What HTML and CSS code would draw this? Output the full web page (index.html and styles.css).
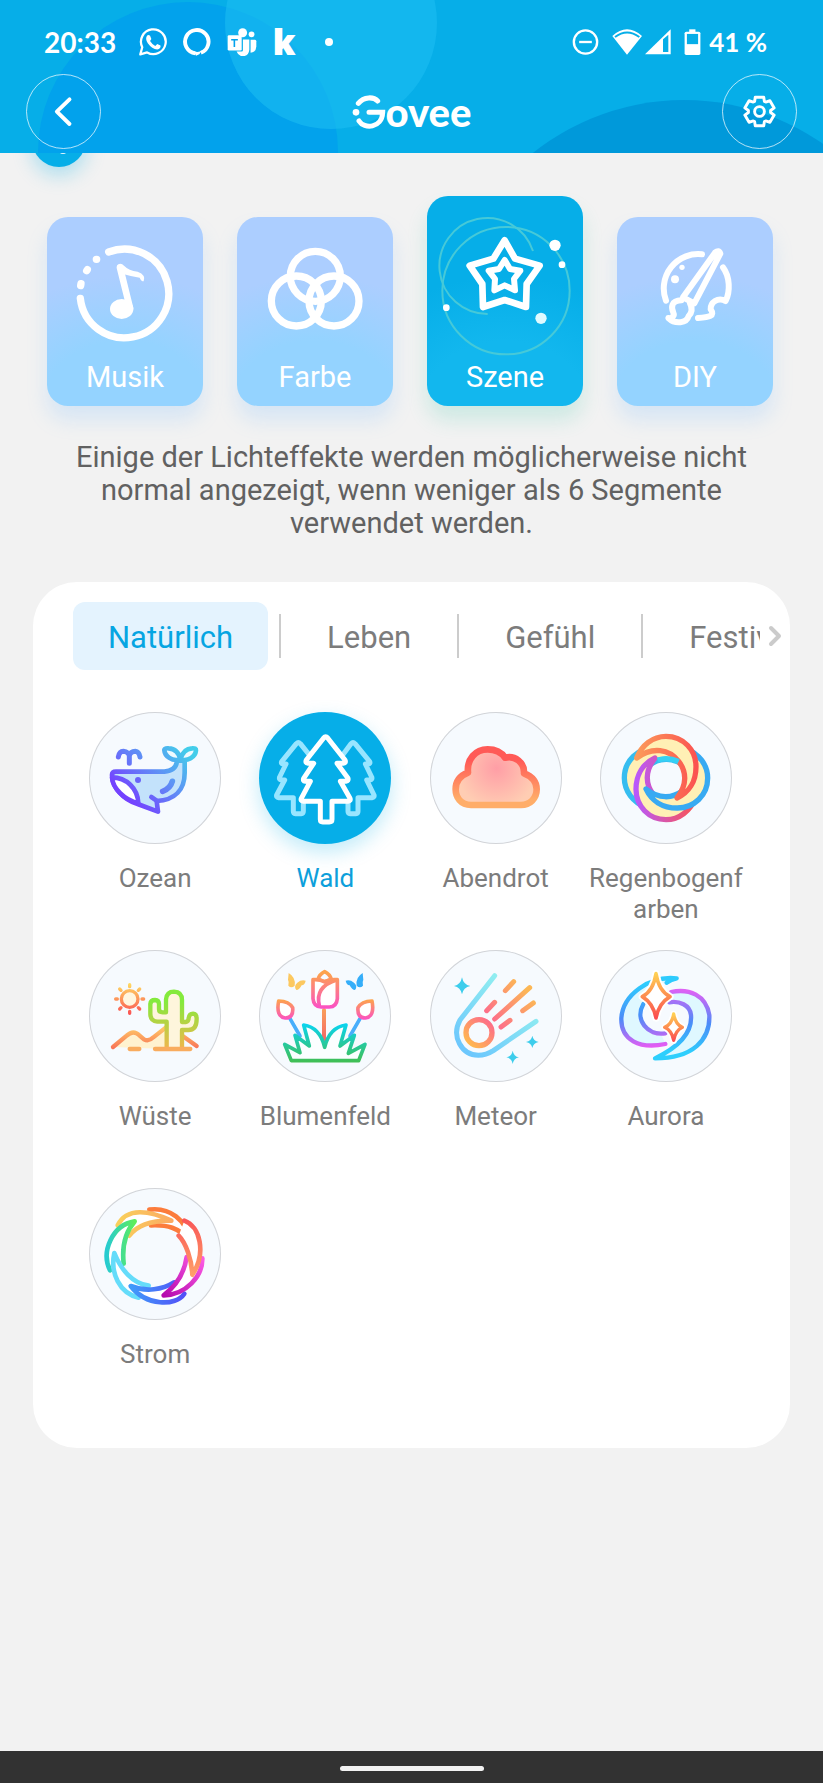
FILE: index.html
```html
<!DOCTYPE html>
<html lang="de">
<head>
    <meta charset="UTF-8">
    <meta name="viewport" content="width=device-width, initial-scale=1.0">
    <title>Govee</title>
    <link rel="stylesheet" href="styles.css">
</head>
<body>
    <header class="header">
        <svg class="header-bg" viewBox="0 0 823 153" preserveAspectRatio="xMidYMid slice" aria-hidden="true">
            <circle cx="188" cy="152" r="150" fill="#02a2ec"/>
            <circle cx="331" cy="23" r="106" fill="#1cbcf2" fill-opacity=".6"/>
            <circle cx="684" cy="342" r="242" fill="#0099da"/>
        </svg>

        <div class="status">
            <span class="status-time">20:33</span>
            <!-- WhatsApp -->
            <svg class="status-icon" viewBox="416 83 86 86">
                <path d="M420 164 L426 142 A38 38 0 1 1 441 158 Z" fill="none" stroke="#fff" stroke-width="7" stroke-linejoin="round"/>
                <path d="M441 106 Q446 102 450 107 L454 117 L450 123 Q456 133 466 138 L472 132 L482 137 Q484 147 472 149 Q456 148 443 130 Q434 116 441 106 Z" fill="#fff"/>
            </svg>
            <!-- Alexa -->
            <svg class="status-icon" viewBox="548 83 86 86">
                <path d="M586 161 A36 36 0 1 1 603 159" fill="none" stroke="#fff" stroke-width="12"/>
                <path d="M580 154 L588 168 L598 164 L606 152 Q596 160 580 154 Z" fill="#fff"/>
            </svg>
            <!-- Teams -->
            <svg class="status-icon teams" viewBox="677 82 92 88">
                <circle cx="725" cy="97" r="14" fill="#fff"/>
                <circle cx="753" cy="102" r="9" fill="#fff"/>
                <path d="M750 119 H764 Q768 119 768 124 V140 Q767 158 750 160 Z" fill="#fff"/>
                <path d="M726 118 H746 V150 Q744 170 725 171 Q711 170 706 156 H722 Q726 156 726 152 Z" fill="#fff"/>
                <rect x="678" y="105" width="44" height="48" rx="4" fill="#fff"/>
                <path d="M689 119 H710 M699 119 V142" stroke="#02a2ec" stroke-width="5"/>
            </svg>
            <span class="status-k">k</span>
            <span class="status-dot"></span>

            <div class="status-right">
                <!-- do not disturb -->
                <svg class="dnd" viewBox="485 86 80 78" fill="none" stroke="#fff">
                    <circle cx="525" cy="125" r="35" stroke-width="7"/>
                    <path d="M506 125 H544" stroke-width="7"/>
                </svg>
                <!-- wifi -->
                <svg class="wifi" viewBox="605 86 90 78">
                    <path d="M650 163 L606 107 Q650 67 695 107 Z" fill="#fff"/>
                    <path d="M614 110 Q650 83 687 110" fill="none" stroke="#06aee8" stroke-width="6"/>
                </svg>
                <!-- signal -->
                <svg class="signal" viewBox="703 86 78 78">
                    <path d="M703 162 L780 87 V162 Z" fill="#fff"/>
                    <path d="M757 117 L773 103 V155 H757 Z" fill="#06aee8"/>
                </svg>
                <!-- battery -->
                <svg class="battery" viewBox="821 86 50 79">
                    <rect x="836" y="87" width="19" height="10" fill="#fff"/>
                    <rect x="822" y="94" width="48" height="71" rx="5" fill="#fff"/>
                    <rect x="829" y="101" width="34" height="31" fill="#06aee8"/>
                </svg>
                <span class="status-percent">41 %</span>
            </div>
        </div>

        <div class="titlebar">
            <button class="round-button" aria-label="Zurück">
                <svg viewBox="78 222 225 225"><path d="M209 297 L170 335 L209 373" fill="none" stroke="#fff" stroke-width="12" stroke-linecap="round" stroke-linejoin="round"/></svg>
            </button>
            <h1 class="logo" aria-label="Govee">
                <svg viewBox="20 25 100 102" fill="none" stroke="#fff" stroke-width="15" stroke-linecap="round">
                    <path d="M38 50 C55 29 84 30 96 43"/>
                    <path d="M70 77 H111 C109 126 55 128 40 103"/>
                    <circle cx="31" cy="77" r="10" fill="#fff" stroke="none"/>
                </svg>
                <span>ovee</span>
            </h1>
            <button class="round-button" aria-label="Einstellungen">
                <svg viewBox="-112 -112 224 224" fill="none" stroke="#fff" stroke-width="9" stroke-linejoin="round">
                    <path d="M-15 -31 L-13 -44 L13 -44 L15 -31 L19 -29 L32 -33 L45 -11 L34 -3 L34 3 L45 11 L32 33 L19 29 L15 31 L13 44 L-13 44 L-15 31 L-19 29 L-32 33 L-45 11 L-34 3 L-34 -3 L-45 -11 L-32 -33 L-19 -29 Z"/>
                    <circle r="15"/>
                </svg>
            </button>
        </div>
    </header>

    <main class="main">
        <span class="bubble"></span>

        <div class="modes">
            <button class="mode">
                <svg viewBox="80 111 468 396" fill="none" stroke="#fff" stroke-width="22" stroke-linecap="round">
                    <path d="M265 216 A133 133 0 1 1 180 355"/>
                    <path d="M228 238 h1 M201 269 l-2 3 M182 311 l-1 6"/>
                    <path d="M299 263 L329 384" stroke-width="20"/>
                    <path d="M290 256 Q300 246 312 258 Q325 272 352 275 Q378 285 370 304 Q362 304 358 293 Q335 290 308 282 Z" fill="#fff" stroke="none"/>
                    <ellipse cx="304" cy="387" rx="35" ry="30" fill="#fff" stroke="none"/>
                </svg>
                <span>Musik</span>
            </button>
            <button class="mode">
                <svg viewBox="651 111 468 396" fill="none" stroke="#fff" stroke-width="22">
                    <circle cx="886" cy="289" r="75"/>
                    <circle cx="829" cy="363" r="75"/>
                    <circle cx="942" cy="363" r="75"/>
                </svg>
                <span>Farbe</span>
            </button>
            <button class="mode active">
                <svg viewBox="53 111 468 396" fill="none" stroke="#fff" stroke-width="20" stroke-linejoin="round">
                    <g stroke="#46c9d8" stroke-width="6">
                        <circle cx="290" cy="332" r="191"/>
                        <path d="M371 213 A144 144 0 1 0 235 402"/>
                    </g>
                    <path d="M286 181 L317 236 L391 257 L352 312 L350 381 L286 360 L221 381 L219 312 L181 257 L252 236 Z"/>
                    <path d="M286 240 L302 267 L333 272 L314 297 L317 331 L286 316 L255 331 L257 297 L238 272 L269 267 Z" stroke-width="18"/>
                    <g fill="#fff" stroke="none">
                        <circle cx="437" cy="196" r="17"/>
                        <circle cx="458" cy="254" r="10"/>
                        <circle cx="111" cy="383" r="10"/>
                        <circle cx="395" cy="415" r="17" fill="#dffaff"/>
                    </g>
                </svg>
                <span>Szene</span>
            </button>
            <button class="mode">
                <svg viewBox="623 111 468 396" fill="none" stroke="#fff" stroke-width="18" stroke-linecap="round" stroke-linejoin="round">
                    <path d="M770 362 A103 103 0 0 1 878 223"/>
                    <path d="M941 262 C962 290 963 335 949 363 C925 350 903 368 904 388 C918 408 900 412 866 414"/>
                    <path d="M821 352 L917 218 Q929 208 933 221 L855 370 Z"/>
                    <path d="M816 361 C785 362 785 382 792 398 C797 409 785 416 777 414 C798 434 832 430 838 408 C850 396 848 382 842 370"/>
                    <circle cx="818" cy="262" r="8" fill="#fff" stroke="none"/>
                    <circle cx="797" cy="298" r="12" fill="#fff" stroke="none"/>
                </svg>
                <span>DIY</span>
            </button>
        </div>

        <p class="hint">Einige der Lichteffekte werden möglicherweise nicht normal angezeigt, wenn weniger als 6 Segmente verwendet werden.</p>

        <section class="panel">
            <div class="tabs-row">
                <nav class="tabs">
                    <button class="tab active">Natürlich</button>
                    <span class="divider"></span>
                    <button class="tab">Leben</button>
                    <span class="divider"></span>
                    <button class="tab">Gefühl</button>
                    <span class="divider"></span>
                    <button class="tab">Festival</button>
                </nav>
                <svg class="tabs-more" viewBox="0 0 14 24"><path d="M3 4 L11 12 L3 20" fill="none" stroke="#cbcbcb" stroke-width="4" stroke-linecap="round" stroke-linejoin="round"/></svg>
            </div>

            <div class="scenes">
                <button class="scene">
                    <svg viewBox="59 36 396 396" fill="none" stroke="url(#whale)" stroke-width="14" stroke-linecap="round" stroke-linejoin="round">
                        <defs>
                            <linearGradient id="whale" gradientUnits="userSpaceOnUse" x1="350" y1="150" x2="190" y2="310">
                                <stop offset="0" stop-color="#43cdea"/>
                                <stop offset=".45" stop-color="#5e92f5"/>
                                <stop offset="1" stop-color="#7442ff"/>
                            </linearGradient>
                        </defs>
                        <path d="M140 215 H285 Q321 212 323 182 H346 V218 C346 268 318 300 262 303 L266 335 L205 312 C160 298 128 260 128 225 Q128 215 140 215 Z" fill="#c3e2fb"/>
                        <path d="M128 232 C170 232 206 265 207 310 C165 300 130 265 128 232 Z" fill="#fff"/>
                        <path d="M246 291 L265 304"/>
                        <path d="M333 178 C308 186 286 168 285 150 Q286 144 298 145 Q326 146 333 178 Q342 146 368 145 Q381 144 380 151 C378 172 355 185 333 178 Z" fill="#effaff"/>
                        <path d="M280 274 Q303 266 309 244" stroke-width="17"/>
                        <path d="M147 171 Q150 154 162 154 Q178 156 180 168 V190 M180 168 Q183 154 198 154 Q209 155 212 171" stroke-width="15"/>
                        <circle cx="206" cy="240" r="9" fill="#6a63f9" stroke="none"/>
                    </svg>
                    <span>Ozean</span>
                </button>
                <button class="scene active">
                    <svg viewBox="569 36 396 396" fill="#06aee8" stroke="#98e5ff" stroke-width="15" stroke-linejoin="round">
                        <path d="M681 131 Q687 125 693 131 L737 186 Q740 192 732 192 H726 L744 231 Q746 239 734 240 L751 284 Q753 293 743 293 H702 V334 Q702 341 696 341 H678 Q672 341 672 334 V293 H628 Q620 292 622 285 L646 240 H636 Q628 239 631 231 L650 192 H642 Q634 191 637 185 Z"/>
                        <path d="M845 131 Q851 125 857 131 L901 185 Q904 191 896 192 H888 L907 231 Q910 239 902 240 H892 L914 285 Q916 292 908 293 H866 V334 Q866 341 860 341 H842 Q836 341 836 334 V293 H800 V192 Z"/>
                        <path d="M763 114 Q769 107 775 114 L827 180 Q831 189 822 190 H803 L836 235 Q838 243 830 244 H813 L842 295 Q845 303 836 304 H788 V358 Q788 366 780 366 H760 Q753 366 753 358 V304 H702 Q693 303 696 295 L723 244 H708 Q700 243 703 235 L733 190 H716 Q707 189 711 180 Z" stroke="#fff"/>
                    </svg>
                    <span>Wald</span>
                </button>
                <button class="scene">
                    <svg viewBox="60 36 396 396">
                        <defs>
                            <linearGradient id="cloud" x1="0" y1="0" x2="0" y2="1">
                                <stop offset=".2" stop-color="#ff5a57"/>
                                <stop offset=".9" stop-color="#ffad69"/>
                            </linearGradient>
                            <radialGradient id="glow" gradientUnits="userSpaceOnUse" cx="260" cy="205" r="120">
                                <stop offset="0" stop-color="#ff9ea6"/>
                                <stop offset="1" stop-color="#ffcdb3"/>
                            </radialGradient>
                        </defs>
                        <path d="M183 315 C152 315 137 292 137 268 C137 240 153 226 174 218 C170 178 196 148 233 148 C258 148 275 158 285 173 C315 165 344 188 342 220 C368 230 380 248 380 268 C380 295 360 315 333 315 Z" fill="url(#glow)" stroke="url(#cloud)" stroke-width="20" stroke-linejoin="round"/>
                    </svg>
                    <span>Abendrot</span>
                </button>
                <button class="scene">
                    <svg viewBox="572 36 396 396" fill="#fff0b5" stroke-width="16" stroke-linejoin="round">
                        <defs>
                            <path id="crescent" d="M682 174 C697 136 730 109 770 109 C822 109 860 150 860 200 C860 245 838 278 803 294 C834 255 832 215 808 184 C780 148 730 138 682 174 Z"/>
                            <linearGradient id="r1" x1="0" y1="0" x2="1" y2="0"><stop offset="0" stop-color="#fb9a5b"/><stop offset="1" stop-color="#fb5450"/></linearGradient>
                            <linearGradient id="r2" x1="0" y1="0" x2="1" y2="0"><stop offset="0" stop-color="#fb5450"/><stop offset="1" stop-color="#b958fb"/></linearGradient>
                        </defs>
                        <use href="#crescent" stroke="#36bdf0" transform="rotate(270 770 234)"/>
                        <use href="#crescent" stroke="url(#r2)" transform="rotate(180 770 234)"/>
                        <use href="#crescent" stroke="#38aaf2" transform="rotate(90 770 234)"/>
                        <use href="#crescent" stroke="url(#r1)"/>
                        <path d="M745 180 Q775 170 808 184" fill="none" stroke="#36d0f4"/>
                    </svg>
                    <span>Regenbogenfarben</span>
                </button>
                <button class="scene">
                    <svg viewBox="59 30 396 396" fill="none" stroke-width="13" stroke-linecap="round" stroke-linejoin="round">
                        <defs>
                            <linearGradient id="sun" gradientUnits="userSpaceOnUse" x1="0" y1="130" x2="0" y2="222"><stop offset="0" stop-color="#ffdc62"/><stop offset="1" stop-color="#fb5353"/></linearGradient>
                            <linearGradient id="cactus" gradientUnits="userSpaceOnUse" x1="0" y1="150" x2="0" y2="325"><stop offset=".2" stop-color="#84ea3d"/><stop offset="1" stop-color="#efb64b"/></linearGradient>
                            <linearGradient id="dune" gradientUnits="userSpaceOnUse" x1="0" y1="265" x2="0" y2="325"><stop offset="0" stop-color="#ffc565"/><stop offset="1" stop-color="#f87458"/></linearGradient>
                        </defs>
                        <path d="M131 321 L172 287 Q192 268 210 286 L224 298 Q238 306 252 292 L290 262 V327 Z" fill="#fff2cf" stroke="none"/>
                        <path d="M131 321 L172 287 Q192 268 210 286 L224 298 Q238 306 252 292 L290 262 M340 288 L382 318" stroke="url(#dune)"/>
                        <circle cx="181" cy="177" r="25" fill="#fff6df" stroke="url(#sun)" stroke-width="10"/>
                        <path d="M181 134 v6 M181 214 v6 M139 177 h5 M218 177 h5 M151 147 l4 4 M211 147 l-4 4 M151 207 l4 -4 M211 207 l-4 -4" stroke="url(#sun)" stroke-width="10"/>
                        <path d="M292 322 V245 H264 Q243 243 243 222 V192 Q244 180 257 180 Q269 181 269 192 V208 Q269 217 280 217 H290 V178 Q292 155 314 155 Q338 156 338 180 V246 H349 Q358 245 358 234 Q360 221 371 221 Q382 222 382 236 Q382 270 357 270 H338 V322" fill="#fef5dc" stroke="url(#cactus)"/>
                        <path d="M181 327 H210 M257 327 H363" stroke="#f9ac5e"/>
                    </svg>
                    <span>Wüste</span>
                </button>
                <button class="scene">
                    <svg viewBox="569 30 396 396" fill="none" stroke-width="11" stroke-linecap="round" stroke-linejoin="round">
                        <defs>
                            <linearGradient id="tulip" gradientUnits="userSpaceOnUse" x1="0" y1="100" x2="0" y2="205"><stop offset="0" stop-color="#fda34d"/><stop offset="1" stop-color="#fb4fc6"/></linearGradient>
                            <linearGradient id="bud" gradientUnits="userSpaceOnUse" x1="0" y1="180" x2="0" y2="240"><stop offset="0" stop-color="#fda34d"/><stop offset="1" stop-color="#fb4fc6"/></linearGradient>
                            <linearGradient id="grass" gradientUnits="userSpaceOnUse" x1="0" y1="250" x2="0" y2="365"><stop offset="0" stop-color="#09d4f2"/><stop offset="1" stop-color="#40bf55"/></linearGradient>
                            <linearGradient id="stem" gradientUnits="userSpaceOnUse" x1="0" y1="205" x2="0" y2="300"><stop offset="0" stop-color="#f9a05a"/><stop offset="1" stop-color="#f56866"/></linearGradient>
                        </defs>
                        <path d="M764 210 V300 L765 301" stroke="url(#stem)" stroke-width="12"/>
                        <path d="M662 236 L692 288 M872 236 L842 288" stroke="#48aefb"/>
                        <path d="M746 118 Q750 103 766 95 Q782 103 786 118 L766 125 Z" stroke="url(#tulip)"/>
                        <path d="M731 119 Q752 117 766 126 Q780 117 804 119 V176 Q802 201 780 201 H755 Q733 200 731 176 Z" fill="#fff" stroke="url(#tulip)"/>
                        <path d="M802 120 Q736 140 750 197" stroke="url(#tulip)"/>
                        <path d="M628 183 Q659 184 670 203 Q673 234 648 234 Q619 230 628 183 Z" fill="#fff" stroke="url(#bud)"/>
                        <path d="M908 183 Q877 184 866 203 Q863 234 888 234 Q917 230 908 183 Z" fill="#fff" stroke="url(#bud)"/>
                        <path d="M666 362 H868 L887 313 L837 340 L855 286 L812 318 L830 255 Q780 262 766 322 Q752 262 703 255 L720 318 L677 286 L692 338 L646 313 Z" fill="#fbfeff" stroke="url(#grass)"/>
                        <path d="M658 99 Q680 112 676 137 Q666 146 657 137 Q660 126 656 119 Z M681 150 Q672 138 684 128 Q696 118 709 122 Q707 134 697 136 Q690 150 681 150 Z" fill="#fcc860"/>
                        <path d="M880 99 Q858 112 862 137 Q872 146 881 137 Q878 126 882 119 Z M857 150 Q866 138 854 128 Q842 118 829 122 Q831 134 841 136 Q848 150 857 150 Z" fill="#35aef9"/>
                    </svg>
                    <span>Blumenfeld</span>
                </button>
                <button class="scene">
                    <svg viewBox="60 30 396 396" fill="none" stroke-width="15" stroke-linecap="round" stroke-linejoin="round">
                        <defs>
                            <linearGradient id="trail" gradientUnits="userSpaceOnUse" x1="300" y1="130" x2="150" y2="320"><stop offset="0" stop-color="#92eff0"/><stop offset="1" stop-color="#6cc7fd"/></linearGradient>
                            <linearGradient id="rock" gradientUnits="userSpaceOnUse" x1="240" y1="240" x2="175" y2="310"><stop offset="0" stop-color="#fd6a8b"/><stop offset="1" stop-color="#ffb851"/></linearGradient>
                            <linearGradient id="sparks" gradientUnits="userSpaceOnUse" x1="350" y1="150" x2="250" y2="240"><stop offset="0" stop-color="#fcb755"/><stop offset="1" stop-color="#fd6f89"/></linearGradient>
                        </defs>
                        <path d="M254 107 L150 240 C123 290 155 345 205 346 Q228 346 250 332 L378 244" stroke="url(#trail)"/>
                        <circle cx="207" cy="278" r="39" stroke="url(#rock)" stroke-width="16"/>
                        <path d="M254 237 L359 143 M230 212 L254 187 M286 152 L311 125 M273 261 L300 241 M338 212 L370 189" stroke="url(#sparks)"/>
                        <g fill="#3dcdec">
                            <path d="M156 112 Q160 134 181 138 Q160 142 156 163 Q152 142 132 138 Q152 134 156 112 Z"/>
                            <path d="M367 287 Q370 303 386 306 Q370 309 367 324 Q364 309 348 306 Q364 303 367 287 Z"/>
                            <path d="M308 332 Q311 349 327 352 Q311 355 308 372 Q305 355 289 352 Q305 349 308 332 Z"/>
                        </g>
                    </svg>
                    <span>Meteor</span>
                </button>
                <button class="scene">
                    <svg viewBox="572 30 396 396" fill="none" stroke-width="13" stroke-linecap="round" stroke-linejoin="round">
                        <defs>
                            <linearGradient id="a1" gradientUnits="userSpaceOnUse" x1="720" y1="110" x2="740" y2="320"><stop offset=".1" stop-color="#2ecbfd"/><stop offset=".55" stop-color="#4a8cf8"/><stop offset="1" stop-color="#e55cf3"/></linearGradient>
                            <linearGradient id="a2" gradientUnits="userSpaceOnUse" x1="810" y1="150" x2="790" y2="355"><stop offset="0" stop-color="#dd62f5"/><stop offset=".45" stop-color="#4a8cf8"/><stop offset=".9" stop-color="#2ecffd"/></linearGradient>
                            <linearGradient id="a3" x1="0" y1="0" x2="0" y2="1"><stop offset="0" stop-color="#ffd052"/><stop offset="1" stop-color="#fb4c50"/></linearGradient>
                        </defs>
                        <path d="M802 115 C720 106 640 165 636 235 C634 300 690 328 770 314 L755 282 C700 280 675 225 702 190 C720 150 760 125 802 115 Z" fill="#dff8ff"/>
                        <path d="M785 155 C840 145 890 165 900 225 C903 300 850 355 737 355 C800 325 850 285 845 225 C842 195 810 182 780 187 Z" fill="#dff8ff"/>
                        <path d="M768 312 C690 328 634 300 636 235 C640 165 720 106 802 115 Q785 119 772 128 M702 192 C675 240 715 288 768 280" stroke="url(#a1)"/>
                        <path d="M785 156 C840 145 890 165 900 225 C903 300 850 355 737 355 C800 325 850 285 845 225 C842 195 810 182 780 187" stroke="url(#a2)"/>
                        <g fill="#fff">
                            <path d="M740 101 Q748 152 782 170 Q748 190 740 234 Q732 190 699 170 Q732 152 740 101 Z" stroke="#fff" stroke-width="22"/>
                            <path d="M740 101 Q748 152 782 170 Q748 190 740 234 Q732 190 699 170 Q732 152 740 101 Z" stroke="url(#a3)" stroke-width="11"/>
                            <path d="M793 222 Q798 253 819 262 Q798 272 793 301 Q788 272 766 262 Q788 253 793 222 Z" stroke="#fff" stroke-width="20"/>
                            <path d="M793 222 Q798 253 819 262 Q798 272 793 301 Q788 272 766 262 Q788 253 793 222 Z" stroke="url(#a3)" stroke-width="10"/>
                        </g>
                    </svg>
                    <span>Aurora</span>
                </button>
                <button class="scene">
                    <svg viewBox="59 55 396 396" fill="#fff" stroke-width="14" stroke-linecap="round" stroke-linejoin="round">
                        <defs>
                            <linearGradient id="s1"><stop offset="0" stop-color="#f9d05c"/><stop offset="1" stop-color="#fbab62"/></linearGradient>
                            <linearGradient id="s4" x1="1" y1="0" x2="0" y2="1"><stop offset="0" stop-color="#fd5ce4"/><stop offset="1" stop-color="#b409ad"/></linearGradient>
                            <linearGradient id="s3" x1="0" y1="0" x2="0" y2="1"><stop offset="0" stop-color="#f95858"/><stop offset="1" stop-color="#ff9f68"/></linearGradient>
                            <linearGradient id="s5"><stop offset="0" stop-color="#3f9bfa"/><stop offset="1" stop-color="#5350f7"/></linearGradient>
                            <linearGradient id="s7"><stop offset="0" stop-color="#27cbd0"/><stop offset="1" stop-color="#5dee5b"/></linearGradient>
                        </defs>
                        <path d="M240 120 C300 112 352 150 364 217 C330 172 290 165 245 167" stroke="#fc7c3c"/>
                        <path d="M145 167 C172 112 240 122 306 153 C250 152 205 165 180 198" stroke="url(#s1)"/>
                        <path d="M122 302 C94 245 130 165 196 155 C165 190 158 235 163 282" stroke="url(#s7)"/>
                        <path d="M208 384 C150 370 122 310 135 250 C155 300 190 342 238 348" stroke="#65dcfa"/>
                        <path d="M345 372 C320 410 230 410 184 349 C230 368 280 360 315 338" stroke="url(#s5)"/>
                        <path d="M399 266 C400 320 350 375 283 377 C325 345 345 310 352 262" stroke="url(#s4)"/>
                        <path d="M345 153 C392 170 412 250 369 315 C367 270 350 220 328 198" stroke="url(#s3)"/>
                    </svg>
                    <span>Strom</span>
                </button>
            </div>
        </section>
    </main>

    <footer class="gesture-bar"><span></span></footer>
</body>
</html>
```

FILE: styles.css
```css
* {
    box-sizing: border-box;
}

body {
    display: flex;
    flex-direction: column;
    min-height: 100vh;
    margin: 0;
    background-color: #f2f2f2;
    color: #7c7c7c;
    font-family: Roboto, "Liberation Sans", sans-serif;
}

button {
    margin: 0;
    padding: 0;
    border: none;
    background: none;
    color: inherit;
    font: inherit;
    cursor: pointer;
}

svg {
    display: block;
    flex: none;
}

/* Header */
.header {
    position: relative;
    z-index: 1;
    height: 153px;
    background-color: #06aee8;
    color: #ffffff;
}

.header-bg {
    position: absolute;
    top: 0;
    left: 0;
    width: 100%;
    height: 100%;
}

.status {
    position: relative;
    display: flex;
    align-items: center;
    gap: 16px;
    height: 74px;
    padding: 9px 56px 0 44px;
    font-family: Lato, Roboto, sans-serif;
    font-size: 28px;
    font-weight: 700;
    line-height: 28px;
}

.status-time {
    width: 79px;
}

.status-icon {
    width: 28px;
    height: 28px;
}

.teams {
    width: 30px;
}

.status-k {
    width: 24px;
    font-family: Inter, Roboto, sans-serif;
    font-size: 37px;
    font-weight: 900;
}

.status-dot {
    width: 8px;
    height: 8px;
    margin-left: 12px;
    border-radius: 50%;
    background-color: #ffffff;
}

.status-right {
    display: flex;
    align-items: center;
    margin-left: auto;
}

.status-percent {
    font-size: 26px;
}

.dnd {
    width: 27px;
    height: 26px;
    margin-right: 13px;
}

.wifi {
    width: 30px;
    height: 26px;
    margin-right: 3px;
}

.signal {
    width: 26px;
    height: 26px;
    margin-right: 13px;
}

.battery {
    width: 17px;
    height: 26px;
    margin-right: 8px;
}

.titlebar {
    position: relative;
    display: flex;
    align-items: center;
    justify-content: space-between;
    padding: 0 26px;
}

.round-button {
    width: 75px;
    height: 75px;
    border: 1px solid rgba(255, 255, 255, 0.7);
    border-radius: 50%;
}

.logo {
    display: flex;
    align-items: center;
    margin: 0;
    font-family: Lato, Roboto, sans-serif;
    font-size: 40px;
    font-weight: 900;
    line-height: 34px;
}

.logo svg {
    width: 34px;
    height: 34px;
}

/* Mode cards */
.main {
    position: relative;
    padding: 43px 33px 24px;
}

.bubble {
    position: absolute;
    top: -40px;
    left: 32px;
    width: 54px;
    height: 54px;
    border-radius: 50%;
    background-color: #06aee8;
    box-shadow: 0 8px 20px rgba(6, 174, 232, 0.3);
}

.bubble::after {
    content: "";
    position: absolute;
    top: 37px;
    left: 28px;
    width: 6px;
    height: 4px;
    border-radius: 2px;
    background-color: #d8f3fd;
}

.modes {
    display: flex;
    align-items: flex-end;
    gap: 34px;
    padding: 0 17px 0 14px;
}

.mode {
    flex: 1;
    padding-bottom: 12px;
    border-radius: 21px;
    background: radial-gradient(165px 130px at 50% 100%, #94d3ff 50%, #acceff 100%);
    box-shadow: 0 14px 20px rgba(120, 185, 255, 0.22);
    color: #ffffff;
    font-size: 29px;
    line-height: 34px;
}

.mode svg {
    width: 100%;
    height: 132px;
    margin-bottom: 11px;
    overflow: visible;
}

.mode.active {
    padding-top: 21px;
    background: radial-gradient(165px 130px at 50% 100%, #12b7ee 50%, #06aee8 100%);
    box-shadow: 0 14px 20px rgba(60, 200, 170, 0.2);
}

.hint {
    margin: 35px 40px 42px;
    color: #616161;
    font-size: 29px;
    line-height: 33px;
    text-align: center;
}

/* Scene panel */
.panel {
    padding: 20px 0 22px;
    border-radius: 44px;
    background-color: #ffffff;
}

.tabs-row {
    display: flex;
    align-items: center;
    gap: 8px;
    padding: 0 8px 0 40px;
}

.tabs {
    display: flex;
    flex: 1;
    align-items: center;
    gap: 11px;
    min-width: 0;
    overflow: hidden;
}

.tab {
    flex: none;
    height: 68px;
    padding: 3px 35px 0;
    border-radius: 12px;
    font-size: 31px;
}

.tab.active {
    background-color: #e4f3fe;
    color: #06a5e2;
}

.divider {
    flex: none;
    width: 2px;
    height: 44px;
    background-color: #cccccc;
}

.tabs-more {
    width: 14px;
    height: 24px;
}

.scenes {
    display: grid;
    grid-template-columns: repeat(4, 1fr);
    margin-top: 42px;
    padding: 0 39px 0 37px;
}

.scene {
    display: flex;
    flex-direction: column;
    align-items: center;
    height: 238px;
    padding: 0 8px;
    font-size: 26px;
    line-height: 31px;
    word-break: break-all;
}

.scene svg {
    width: 132px;
    height: 132px;
    margin-bottom: 19px;
    border-radius: 50%;
    background-color: #f6fafe;
    box-shadow: inset 0 0 0 1px #d2d4d8;
}

.scene.active {
    color: #0d9fdb;
}

.scene.active svg {
    background-color: #06aee8;
    box-shadow: 0 8px 20px rgba(6, 174, 232, 0.25);
}

/* Android gesture bar */
.gesture-bar {
    display: flex;
    align-items: center;
    justify-content: center;
    height: 32px;
    margin-top: auto;
    padding-top: 2px;
    background-color: #323232;
}

.gesture-bar span {
    width: 144px;
    height: 5px;
    border-radius: 3px;
    background-color: #f2f2f2;
}
```
